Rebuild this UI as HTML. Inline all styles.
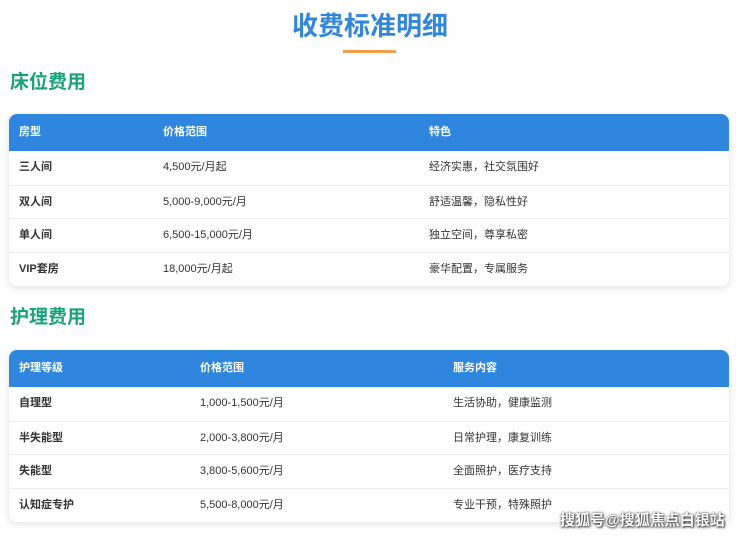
<!DOCTYPE html>
<html><head><meta charset="utf-8"><style>
*{margin:0;padding:0;box-sizing:border-box}
body{width:740px;height:536px;background:#fff;font-family:"Liberation Sans","Noto Sans CJK SC",sans-serif;position:relative;overflow:hidden;color:#333}
.t{position:absolute;top:9px;left:0;width:740px;text-align:center;font-size:26px;font-weight:bold;color:#2e86de;line-height:34px}
.ul{position:absolute;left:343px;top:50px;width:53px;height:3px;background:#f2a04a}
h2{position:absolute;left:10px;font-size:19px;font-weight:bold;color:#17a37a;line-height:24px}
.tb{position:absolute;left:9px;width:720px;border-radius:8px;overflow:hidden;box-shadow:0 2px 8px rgba(0,0,0,0.12);background:#fff}
.r{position:relative;height:33.7px;border-top:1px solid #eee;font-size:11px;line-height:32px}
.r span{position:absolute;top:0}
.h{background:#2e86de;color:#fff;font-weight:bold;height:37px;line-height:37px;border:none}
.r span.f{font-weight:bold}
.wm{position:absolute;left:560px;top:509px;font-size:15px;color:#fff;font-weight:bold;text-shadow:0 0 2px #333,1px 1px 2px #333}
</style></head><body>
<div class="t">收费标准明细</div><div class="ul"></div>
<h2 style="top:71px">床位费用</h2>
<div class="tb" style="top:114px">
<div class="r h"><span style="left:10px">房型</span><span style="left:154px">价格范围</span><span style="left:420px">特色</span></div>
<div class="r" style="border:none"><span class="f" style="left:10px">三人间</span><span style="left:154px">4,500元/月起</span><span style="left:420px">经济实惠，社交氛围好</span></div>
<div class="r"><span class="f" style="left:10px">双人间</span><span style="left:154px">5,000-9,000元/月</span><span style="left:420px">舒适温馨，隐私性好</span></div>
<div class="r"><span class="f" style="left:10px">单人间</span><span style="left:154px">6,500-15,000元/月</span><span style="left:420px">独立空间，尊享私密</span></div>
<div class="r"><span class="f" style="left:10px">VIP套房</span><span style="left:154px">18,000元/月起</span><span style="left:420px">豪华配置，专属服务</span></div>
</div>
<h2 style="top:306px">护理费用</h2>
<div class="tb" style="top:350px">
<div class="r h"><span style="left:10px">护理等级</span><span style="left:191px">价格范围</span><span style="left:444px">服务内容</span></div>
<div class="r" style="border:none"><span class="f" style="left:10px">自理型</span><span style="left:191px">1,000-1,500元/月</span><span style="left:444px">生活协助，健康监测</span></div>
<div class="r"><span class="f" style="left:10px">半失能型</span><span style="left:191px">2,000-3,800元/月</span><span style="left:444px">日常护理，康复训练</span></div>
<div class="r"><span class="f" style="left:10px">失能型</span><span style="left:191px">3,800-5,600元/月</span><span style="left:444px">全面照护，医疗支持</span></div>
<div class="r"><span class="f" style="left:10px">认知症专护</span><span style="left:191px">5,500-8,000元/月</span><span style="left:444px">专业干预，特殊照护</span></div>
</div>
<div class="wm">搜狐号@搜狐焦点白银站</div>
</body></html>
